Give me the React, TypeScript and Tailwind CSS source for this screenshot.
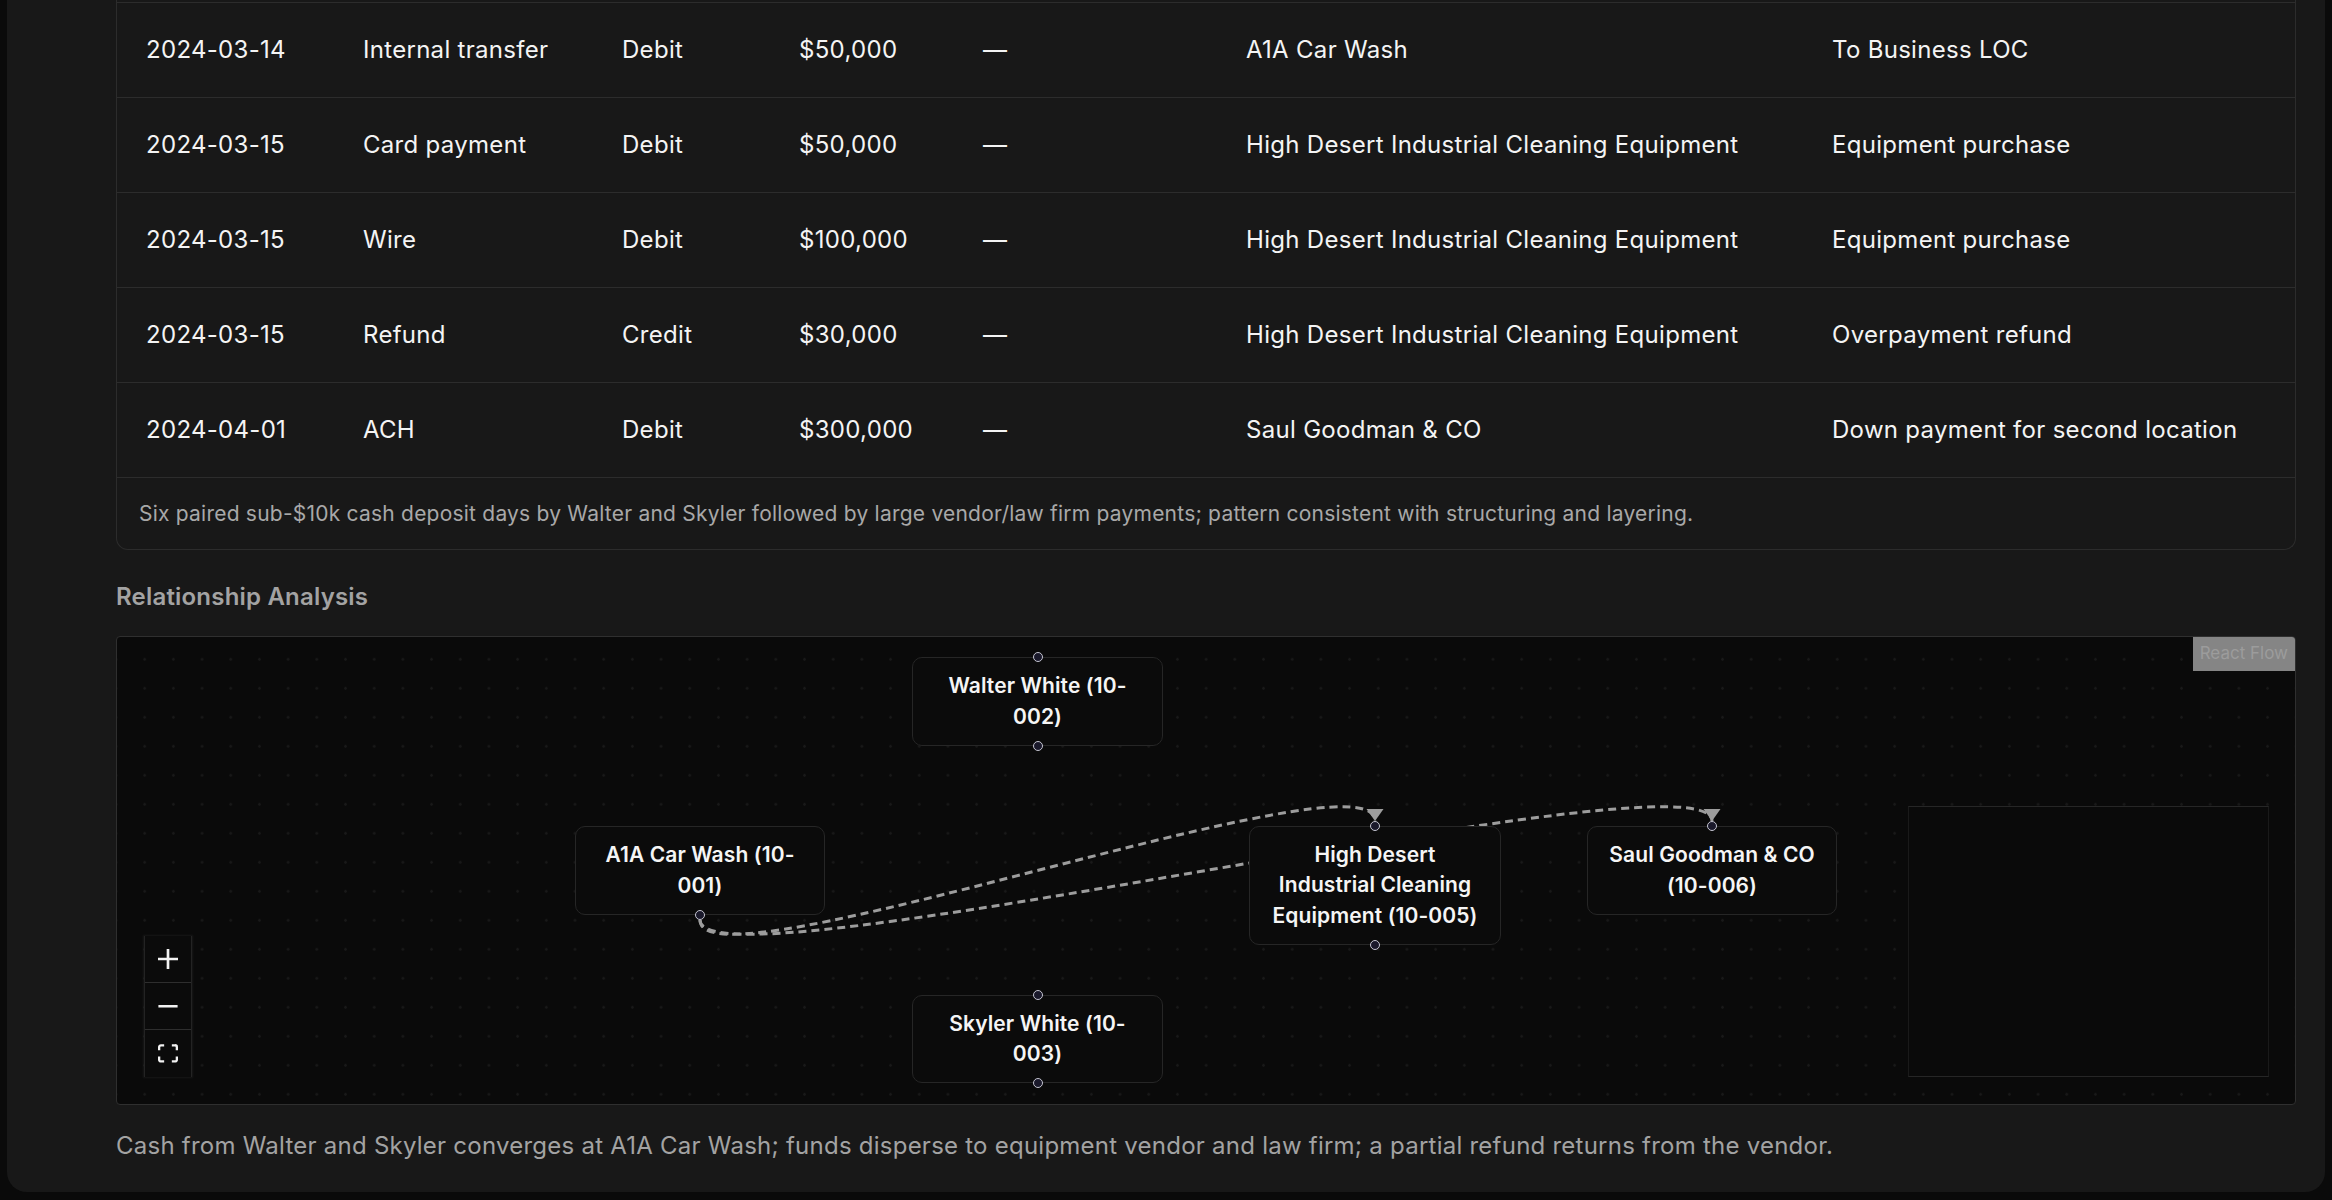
import React from 'react';

type Txn = {
  date: string;
  kind: string;
  direction: string;
  amount: string;
  check: string;
  party: string;
  memo: string;
};

const txns: Txn[] = [
  { date: '2024-03-14', kind: 'Internal transfer', direction: 'Debit', amount: '$50,000', check: '—', party: 'A1A Car Wash', memo: 'To Business LOC' },
  { date: '2024-03-15', kind: 'Card payment', direction: 'Debit', amount: '$50,000', check: '—', party: 'High Desert Industrial Cleaning Equipment', memo: 'Equipment purchase' },
  { date: '2024-03-15', kind: 'Wire', direction: 'Debit', amount: '$100,000', check: '—', party: 'High Desert Industrial Cleaning Equipment', memo: 'Equipment purchase' },
  { date: '2024-03-15', kind: 'Refund', direction: 'Credit', amount: '$30,000', check: '—', party: 'High Desert Industrial Cleaning Equipment', memo: 'Overpayment refund' },
  { date: '2024-04-01', kind: 'ACH', direction: 'Debit', amount: '$300,000', check: '—', party: 'Saul Goodman & CO', memo: 'Down payment for second location' },
];

type FlowNode = {
  id: string;
  lines: string[];
  x: number;
  y: number;
  w: number;
  h: number;
  top: boolean;
  bottom: boolean;
};

// positions are in canvas pixels (inside the border)
const nodes: FlowNode[] = [
  { id: '10-002', lines: ['Walter White (10-', '002)'], x: 795, y: 20, w: 251, h: 89, top: true, bottom: true },
  { id: '10-001', lines: ['A1A Car Wash (10-', '001)'], x: 458, y: 189, w: 250, h: 89, top: false, bottom: true },
  { id: '10-003', lines: ['Skyler White (10-', '003)'], x: 795, y: 358, w: 251, h: 88, top: true, bottom: true },
  { id: '10-005', lines: ['High Desert', 'Industrial Cleaning', 'Equipment (10-005)'], x: 1132, y: 189, w: 252, h: 119, top: true, bottom: true },
  { id: '10-006', lines: ['Saul Goodman & CO', '(10-006)'], x: 1470, y: 189, w: 250, h: 89, top: true, bottom: false },
];

const edges = [
  { id: 'e1', d: 'M583,283 C583,358 1258,109 1258,184', tip: [1258, 184] },
  { id: 'e2', d: 'M583,283 C583,358 1595,109 1595,184', tip: [1595, 184] },
];

function Handle({ x, y }: { x: number; y: number }) {
  return (
    <div
      className="absolute w-[10px] h-[10px] rounded-full bg-[#1a192b] border border-[#c4c4d0]"
      style={{ left: x - 5, top: y - 5 }}
    />
  );
}

function Node({ n }: { n: FlowNode }) {
  return (
    <>
      <div
        className="absolute flex flex-col items-center justify-center rounded-[10px] border border-[#262626] bg-[#0b0b0b] text-center text-[21px] leading-[30.5px] font-semibold tracking-[0.1px] text-[#f5f5f5]"
        style={{ left: n.x, top: n.y, width: n.w, height: n.h }}
      >
        {n.lines.map((l) => (
          <span key={l} className="block whitespace-nowrap">
            {l}
          </span>
        ))}
      </div>
      {n.top && <Handle x={n.x + n.w / 2} y={n.y} />}
      {n.bottom && <Handle x={n.x + n.w / 2} y={n.y + n.h} />}
    </>
  );
}

function Controls() {
  return (
    <div className="absolute left-[27px] bottom-[27px] w-[48px] flex flex-col border-x border-[#232323] bg-[#0b0b0b] shadow-[0_0_2px_1px_rgba(255,255,255,0.06)]">
      <button className="h-[47px] flex items-center justify-center border-b border-[#2e2e2e]">
        <svg viewBox="0 0 32 32" className="w-[20px] h-[20px] fill-[#f2f2f2]">
          <path d="M32 18.133H18.133V32h-4.266V18.133H0v-4.266h13.867V0h4.266v13.867H32z" />
        </svg>
      </button>
      <button className="h-[47px] flex items-center justify-center border-b border-[#2e2e2e]">
        <svg viewBox="0 0 32 5" className="w-[20px] h-[3px] fill-[#f2f2f2]">
          <path d="M0 0h32v4.2H0z" />
        </svg>
      </button>
      <button className="h-[47px] flex items-center justify-center">
        <svg viewBox="0 0 32 30" className="w-[20px] h-[19px] fill-[#f2f2f2]">
          <path d="M3.692 4.63c0-.53.4-.938.939-.938h5.215V0H4.708C2.13 0 0 2.054 0 4.63v5.216h3.692V4.631zM27.354 0h-5.2v3.692h5.17c.53 0 .984.4.984.939v5.215H32V4.631A4.624 4.624 0 0027.354 0zm.954 24.83c0 .532-.4.94-.939.94h-5.215v3.768h5.215c2.577 0 4.631-2.13 4.631-4.707v-5.139h-3.692v5.139zm-23.677.94c-.531 0-.939-.4-.939-.94v-5.138H0v5.139c0 2.577 2.13 4.707 4.708 4.707h5.138V25.77H4.631z" />
        </svg>
      </button>
    </div>
  );
}

function RelationshipFlow() {
  return (
    <div className="relative h-[469px] overflow-hidden rounded-[4px] border border-[#2f2f2f] bg-[#0a0a0a] bg-[radial-gradient(circle,#191919_1px,transparent_1.6px)] bg-[length:28.7px_29px] bg-[position:-15.35px_7.8px]">
      <svg className="absolute inset-0" width="2180" height="467">
        {edges.map((e) => (
          <g key={e.id}>
            <path d={e.d} fill="none" stroke="#9d9d9d" strokeWidth={3} strokeDasharray="8 5" />
            <polygon
              points={`${e.tip[0] - 8.5},${e.tip[1] - 12} ${e.tip[0] + 8.5},${e.tip[1] - 12} ${e.tip[0]},${e.tip[1]}`}
              fill="#9d9d9d"
            />
          </g>
        ))}
      </svg>

      {nodes.map((n) => (
        <Node key={n.id} n={n} />
      ))}

      <Controls />

      {/* minimap */}
      <div className="absolute right-[26px] bottom-[27px] w-[361px] h-[271px] bg-[#0a0a0a] border-x border-[#1a1a1a] border-y border-y-[#262626]" />

      <div className="absolute top-0 right-0 h-[34px] px-[7px] flex items-center bg-[#858585] text-[17px] text-[#9c9c9c]">
        React Flow
      </div>
    </div>
  );
}

export default function App() {
  return (
    <div className="min-h-screen bg-[#0a0a0a] font-['Inter','Noto_Sans',sans-serif] px-[7px] pb-[8px]">
      <div className="bg-[#181818] rounded-b-[20px] pl-[109px] pr-[29px] pb-[28px]">
        {/* transactions table, scrolled so only the last rows show */}
        <div className="border-x border-b border-[#2c2c2c] rounded-b-[12px] bg-[#181818]">
          <div className="h-[2px]" />
          {txns.map((t, i) => (
            <div
              key={i}
              className="h-[95px] border-t border-[#2c2c2c] grid grid-cols-[217px_259px_177px_184px_263px_586px_1fr] items-center pl-[29px] text-[24px] tracking-[0.3px] text-[#f4f4f4]"
            >
              <span>{t.date}</span>
              <span>{t.kind}</span>
              <span>{t.direction}</span>
              <span>{t.amount}</span>
              <span>{t.check}</span>
              <span>{t.party}</span>
              <span>{t.memo}</span>
            </div>
          ))}
          <div className="h-[72px] border-t border-[#2c2c2c] flex items-center pl-[22px] text-[21px] tracking-[0.22px] text-[#a8a8a8]">
            Six paired sub-$10k cash deposit days by Walter and Skyler followed by large vendor/law firm payments; pattern consistent with structuring and layering.
          </div>
        </div>

        <h2 className="mt-[29px] h-[36px] leading-[36px] text-[24px] font-semibold tracking-[0.2px] text-[#a3a3a3]">
          Relationship Analysis
        </h2>

        <div className="mt-[21px]">
          <RelationshipFlow />
        </div>

        <p className="mt-[23px] leading-[36px] text-[24px] tracking-[0.24px] text-[#a3a3a3]">
          Cash from Walter and Skyler converges at A1A Car Wash; funds disperse to equipment vendor and law firm; a partial refund returns from the vendor.
        </p>
      </div>
    </div>
  );
}
